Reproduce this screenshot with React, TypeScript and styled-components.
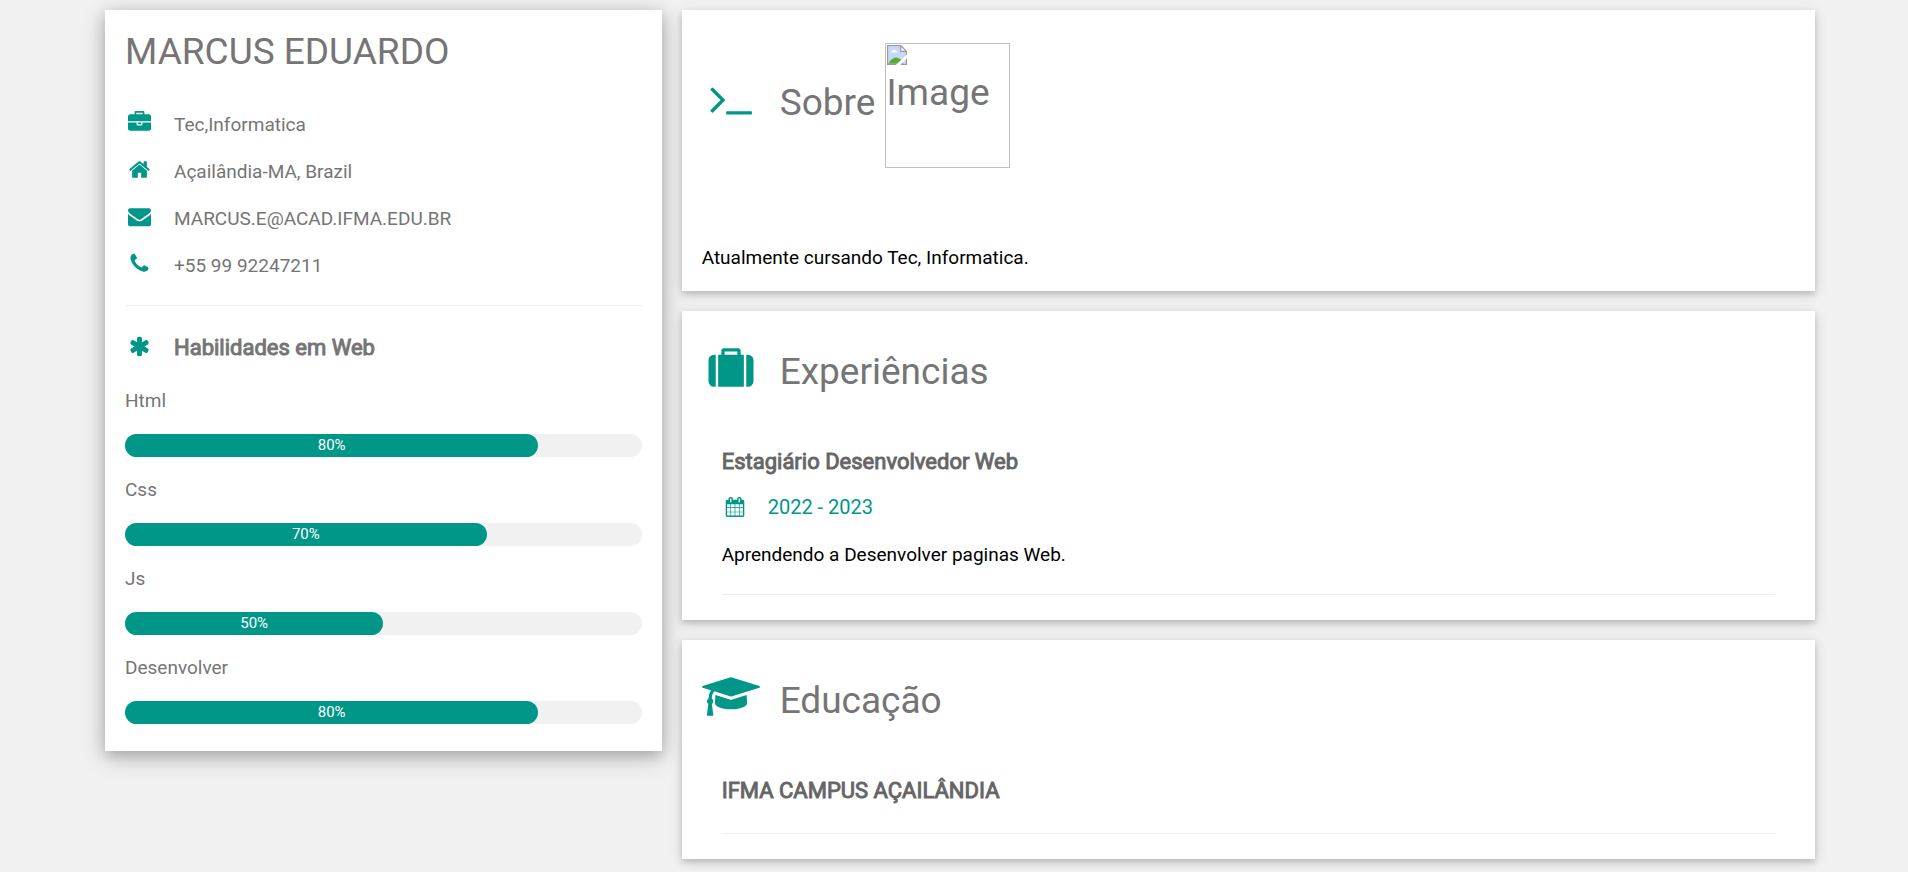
import React from "react";
import styled, { createGlobalStyle } from "styled-components";

const teal = "#009688";
const grey = "#757575";

const GlobalStyle = createGlobalStyle`
  *, *::before, *::after { box-sizing: border-box; }
  body {
    margin: 0;
    background: #f1f1f1;
    color: #000;
    font-family: Roboto, "Liberation Sans", sans-serif;
    font-size: 19px;
    line-height: 28px;
  }
`;

const Page = styled.div`
  padding: 10px 0 12px 12px;
`;

const Content = styled.main`
  display: grid;
  grid-template-columns: 1fr 2fr;
  align-items: start;
  max-width: 1750px;
  margin: 0 auto;
  padding: 0 10px;
`;

const Column = styled.div`
  display: flex;
  flex-direction: column;
  gap: 20px;
  padding: 0 10px;
`;

const ProfileCard = styled.aside`
  padding: 14px 20px 27px;
  background: #fff;
  color: ${grey};
  box-shadow: 0 5px 13px rgba(0, 0, 0, 0.2), 0 5px 25px rgba(0, 0, 0, 0.19);
`;

const Card = styled.section<{ $bottom?: number }>`
  padding: 33px 20px ${(p) => p.$bottom ?? 25}px;
  background: #fff;
  box-shadow: 0 3px 6px rgba(0, 0, 0, 0.16), 0 3px 13px rgba(0, 0, 0, 0.12);
`;

const Name = styled.h1`
  margin: 0 0 31px;
  font-size: 37px;
  font-weight: 400;
  line-height: 56px;
`;

const ContactList = styled.ul`
  display: flex;
  flex-direction: column;
  gap: 19px;
  margin: 0;
  padding: 0;
  list-style: none;
`;

const Rule = styled.hr`
  height: 1px;
  margin: 25px 0;
  border: 0;
  background: #eee;
`;

const LastRule = styled(Rule)`
  margin-bottom: 0;
`;

const Strong = styled.span`
  -webkit-text-stroke: 1px currentColor;
`;

const SkillsTitle = styled.h2`
  margin: 0 0 22px;
  font-size: 22px;
  font-weight: 400;
  line-height: 34px;
`;

const Skill = styled.div`
  display: flex;
  flex-direction: column;
  gap: 19px;

  & + & { margin-top: 19px; }
`;

const Track = styled.div`
  border-radius: 20px;
  background: #f1f1f1;
  font-size: 15px;
  line-height: 23px;
  text-align: center;
`;

const Fill = styled.div`
  border-radius: 20px;
  background: ${teal};
  color: #fff;
`;

const SectionTitle = styled.h2`
  margin: 0;
  color: ${grey};
  font-size: 37px;
  font-weight: 400;
  line-height: 56px;
`;

const Entry = styled.article`
  margin-top: 45px;
  padding: 0 20px;
`;

const EntryTitle = styled.h3`
  margin: 0;
  font-size: 22px;
  font-weight: 400;
  line-height: 34px;
  opacity: 0.6;
`;

const Period = styled.h4`
  margin: 13px 0 19px;
  color: ${teal};
  font-size: 20px;
  font-weight: 400;
  line-height: 30px;
`;

const Paragraph = styled.p`
  margin: 0;
`;

const AboutText = styled(Paragraph)`
  margin-top: 76px;
`;

const Missing = styled.span`
  display: inline-flex;
  flex-direction: column;
  width: 125px;
  height: 125px;
  padding: 1px;
  border: 1px solid silver;
  vertical-align: middle;
`;

const iconSizes = {
  small: { width: 26, height: 20, drop: 3 },
  medium: { width: 29, height: 23, drop: 3 },
  large: { width: 58, height: 45, drop: 6 },
};

type IconSize = keyof typeof iconSizes;

const IconSvg = styled.svg<{ $size: IconSize }>`
  width: ${(p) => iconSizes[p.$size].width}px;
  height: ${(p) => iconSizes[p.$size].height}px;
  margin-right: 20px;
  fill: ${teal};
  vertical-align: -${(p) => iconSizes[p.$size].drop}px;
`;

const BrokenSvg = styled.svg`
  flex: none;
  width: 20px;
  height: 20px;
`;

const icons = {
  briefcase: {
    box: "0 0 1792 1792",
    d: "M640 256h512v-128h-512v128zm1152 640v480q0 66-47 113t-113 47h-1472q-66 0-113-47t-47-113v-480h672v160q0 26 19 45t45 19h320q26 0 45-19t19-45v-160h672zm-768 0v128h-256v-128h256zm768-480v384h-1792v-384q0-66 47-113t113-47h352v-160q0-40 28-68t68-28h576q40 0 68 28t28 68v160h352q66 0 113 47t47 113z",
  },
  home: {
    box: "0 0 1792 1792",
    d: "M1472 992v480q0 26-19 45t-45 19h-384v-384h-256v384h-384q-26 0-45-19t-19-45v-480q0-1 .5-3t.5-3l575-474 575 474q1 2 1 6zm223-69l-62 74q-8 9-21 11h-3q-13 0-21-7l-692-577-692 577q-12 8-24 7-13-2-21-11l-62-74q-8-10-7-23.500t11-21.500l719-599q32-26 76-26t76 26l244 204v-195q0-14 9-23t23-9h192q14 0 23 9t9 23v408l219 182q10 8 11 21.500t-7 23.500z",
  },
  envelope: {
    box: "0 0 1792 1792",
    d: "M1792 710v794q0 66-47 113t-113 47h-1472q-66 0-113-47t-47-113v-794q44 49 101 87 362 246 497 345 57 42 92.500 65.500t94.500 48 110 24.500h2q51 0 110-24.500t94.500-48 92.500-65.500q170-123 498-345 57-39 100-87zm0-294q0 79-49 151t-122 123q-376 261-468 325-10 7-42.500 30.500t-54 38-52 32.500-57.500 27-50 9h-2q-23 0-50-9t-57.500-27-52-32.500-54-38-42.500-30.500q-91-64-262-182.500t-205-142.500q-62-42-117-115.500t-55-136.500q0-78 41.500-130t118.500-52h1472q65 0 112.500 47t47.500 113z",
  },
  phone: {
    box: "0 0 1792 1792",
    d: "M1600 1240q0 27-10 70.500t-21 68.500q-21 50-122 106-94 51-186 51-27 0-52.500-3.500t-57.500-12.500-47.500-14.500-55.500-20.500-49-18q-98-35-175-83-128-79-264.500-215.500t-215.500-264.500q-48-77-83-175-3-9-18-49t-20.500-55.500-14.500-47.500-12.500-57.500-3.500-52.500q0-92 51-186 56-101 106-122 25-11 68.500-21t70.500-10q14 0 21 3 18 6 53 76 11 19 30 54t35 63.500 31 53.500q3 4 17.500 25t21.500 35.500 7 28.500q0 20-28.500 50t-62 55-62 53-28.500 46q0 9 5 22.500t8.500 20.500 14 24 11.500 19q76 137 174 235t235 174q2 1 19 11.500t24 14 20.500 8.500 22.500 5q18 0 46-28.500t53-62 55-62 50-28.500q14 0 28.500 7t35.500 21.500 25 17.500q25 15 53.500 31t63.500 35 54 30q70 35 76 53 3 7 3 21z",
  },
  asterisk: {
    box: "0 0 1792 1792",
    d: "M1546 1050q46 26 59.500 77.500t-12.500 97.500l-64 110q-26 46-77.500 59.500t-97.500-12.500l-266-153v307q0 52-38 90t-90 38h-128q-52 0-90-38t-38-90v-307l-266 153q-46 26-97.500 12.500t-77.500-59.500l-64-110q-26-46-12.500-97.500t59.500-77.500l266-154-266-154q-46-26-59.500-77.500t12.500-97.500l64-110q26-46 77.500-59.500t97.500 12.500l266 153v-307q0-52 38-90t90-38h128q52 0 90 38t38 90v307l266-153q46-26 97.500-12.500t77.500 59.500l64 110q26 46 12.500 97.500t-59.500 77.500l-266 154z",
  },
  suitcase: {
    box: "0 -128 1792 1792",
    d: "M640 256h512v-128h-512v128zm-352 0v1280h-64q-92 0-158-66t-66-158v-832q0-92 66-158t158-66h64zm1120 0v1280h-1024v-1280h128v-160q0-40 28-68t68-28h576q40 0 68 28t28 68v160h128zm384 224v832q0 92-66 158t-158 66h-64v-1280h64q92 0 158 66t66 158z",
  },
  terminal: {
    box: "0 0 1792 1792",
    d: "M649 983l-466 466q-10 10-23 10t-23-10l-50-50q-10-10-10-23t10-23l393-393-393-393q-10-10-10-23t10-23l50-50q10-10 23-10t23 10l466 466q10 10 10 23t-10 23zm1079 457v64q0 14-9 23t-23 9h-960q-14 0-23-9t-9-23v-64q0-14 9-23t23-9h960q14 0 23 9t9 23z",
  },
  graduation: {
    box: "0 0 2304 1792",
    d: "M1774 836l18 316q4 69-82 128t-235 93.500-323 34.500-323-34.500-235-93.500-82-128l18-316 574 181q22 7 48 7t48-7zm530-324q0 23-22 31l-1120 352q-4 1-10 1t-10-1l-652-206q-43 34-71 111.500t-34 178.500q63 36 63 109 0 69-58 107l58 433q2 14-8 25-9 11-24 11h-192q-15 0-24-11-10-11-8-25l58-433q-58-38-58-107 0-73 65-111 11-207 98-330l-333-104q-22-8-22-31t22-31l1120-352q4-1 10-1t10 1l1120 352q22 8 22 31z",
  },
  calendar: {
    box: "0 0 1792 1792",
    d: "M192 1664h288v-288h-288v288zm352 0h320v-288h-320v288zm-352-352h288v-320h-288v320zm352 0h320v-320h-320v320zm-352-384h288v-288h-288v288zm736 736h320v-288h-320v288zm-384-736h320v-288h-320v288zm768 736h288v-288h-288v288zm-384-352h320v-320h-320v320zm-352-864v-288q0-13-9.500-22.500t-22.500-9.500h-64q-13 0-22.500 9.500t-9.500 22.500v288q0 13 9.500 22.500t22.500 9.500h64q13 0 22.500-9.500t9.500-22.500zm736 864h288v-320h-288v320zm-384-384h320v-288h-320v288zm384 0h288v-288h-288v288zm32-480v-288q0-13-9.500-22.500t-22.500-9.500h-64q-13 0-22.500 9.500t-9.500 22.500v288q0 13 9.500 22.500t22.500 9.500h64q13 0 22.500-9.500t9.500-22.500zm384-64v1280q0 52-38 90t-90 38h-1408q-52 0-90-38t-38-90v-1280q0-52 38-90t90-38h128v-96q0-66 47-113t113-47h64q66 0 113 47t47 113v96h384v-96q0-66 47-113t113-47h64q66 0 113 47t47 113v96h128q52 0 90 38t38 90z",
  },
};

type IconName = keyof typeof icons;

function Icon({ name, size = "medium" }: { name: IconName; size?: IconSize }) {
  return (
    <IconSvg $size={size} viewBox={icons[name].box} aria-hidden="true">
      <path d={icons[name].d} />
    </IconSvg>
  );
}

function MissingImage({ alt }: { alt: string }) {
  return (
    <Missing>
      <BrokenSvg viewBox="0 0 16 16" aria-hidden="true">
        <path d="M1 1h10l4 4v10H1z" fill="#c6d9f7" />
        <path d="M3 6q0-1 1-1 1-2 2-1 2 0 2 2z" fill="#fff" />
        <path d="M1 15q3-5 6-5 4 0 6 5z" fill="#5aab36" />
        <path d="M11 1v4h4z" fill="#fff" />
        <path d="M0.500 0.500h10.500l4.500 4.500v10.500h-15z M11 0.500v4.500h4.500" fill="none" stroke="#9a9a9a" />
        <path d="M16 7.500v3L10.500 16H7z" fill="#fff" />
      </BrokenSvg>
      <span>{alt}</span>
    </Missing>
  );
}

const contacts: { icon: IconName; text: string }[] = [
  { icon: "briefcase", text: "Tec,Informatica" },
  { icon: "home", text: "Açailândia-MA, Brazil" },
  { icon: "envelope", text: "MARCUS.E@ACAD.IFMA.EDU.BR" },
  { icon: "phone", text: "+55 99 92247211" },
];

const skills = [
  { name: "Html", level: 80 },
  { name: "Css", level: 70 },
  { name: "Js", level: 50 },
  { name: "Desenvolver", level: 80 },
];

export default function App() {
  return (
    <Page>
      <GlobalStyle />
      <Content>
        <Column>
          <ProfileCard>
            <Name>MARCUS EDUARDO</Name>
            <ContactList>
              {contacts.map((c) => (
                <li key={c.icon}>
                  <Icon name={c.icon} />
                  {c.text}
                </li>
              ))}
            </ContactList>
            <Rule />
            <SkillsTitle>
              <Icon name="asterisk" />
              <Strong>Habilidades em Web</Strong>
            </SkillsTitle>
            {skills.map((s) => (
              <Skill key={s.name}>
                <Paragraph>{s.name}</Paragraph>
                <Track>
                  <Fill style={{ width: `${s.level}%` }}>{s.level}%</Fill>
                </Track>
              </Skill>
            ))}
          </ProfileCard>
        </Column>

        <Column>
          <Card $bottom={19}>
            <SectionTitle>
              <Icon name="terminal" size="large" />
              Sobre <MissingImage alt="Image" />
            </SectionTitle>
            <AboutText>Atualmente cursando Tec, Informatica.</AboutText>
          </Card>

          <Card>
            <SectionTitle>
              <Icon name="suitcase" size="large" />
              Experiências
            </SectionTitle>
            <Entry>
              <EntryTitle>
                <Strong>Estagiário Desenvolvedor Web</Strong>
              </EntryTitle>
              <Period>
                <Icon name="calendar" size="small" />
                2022 - 2023
              </Period>
              <Paragraph>Aprendendo a Desenvolver paginas Web.</Paragraph>
              <LastRule />
            </Entry>
          </Card>

          <Card>
            <SectionTitle>
              <Icon name="graduation" size="large" />
              Educação
            </SectionTitle>
            <Entry>
              <EntryTitle>
                <Strong>IFMA CAMPUS AÇAILÂNDIA</Strong>
              </EntryTitle>
              <LastRule />
            </Entry>
          </Card>
        </Column>
      </Content>
    </Page>
  );
}
